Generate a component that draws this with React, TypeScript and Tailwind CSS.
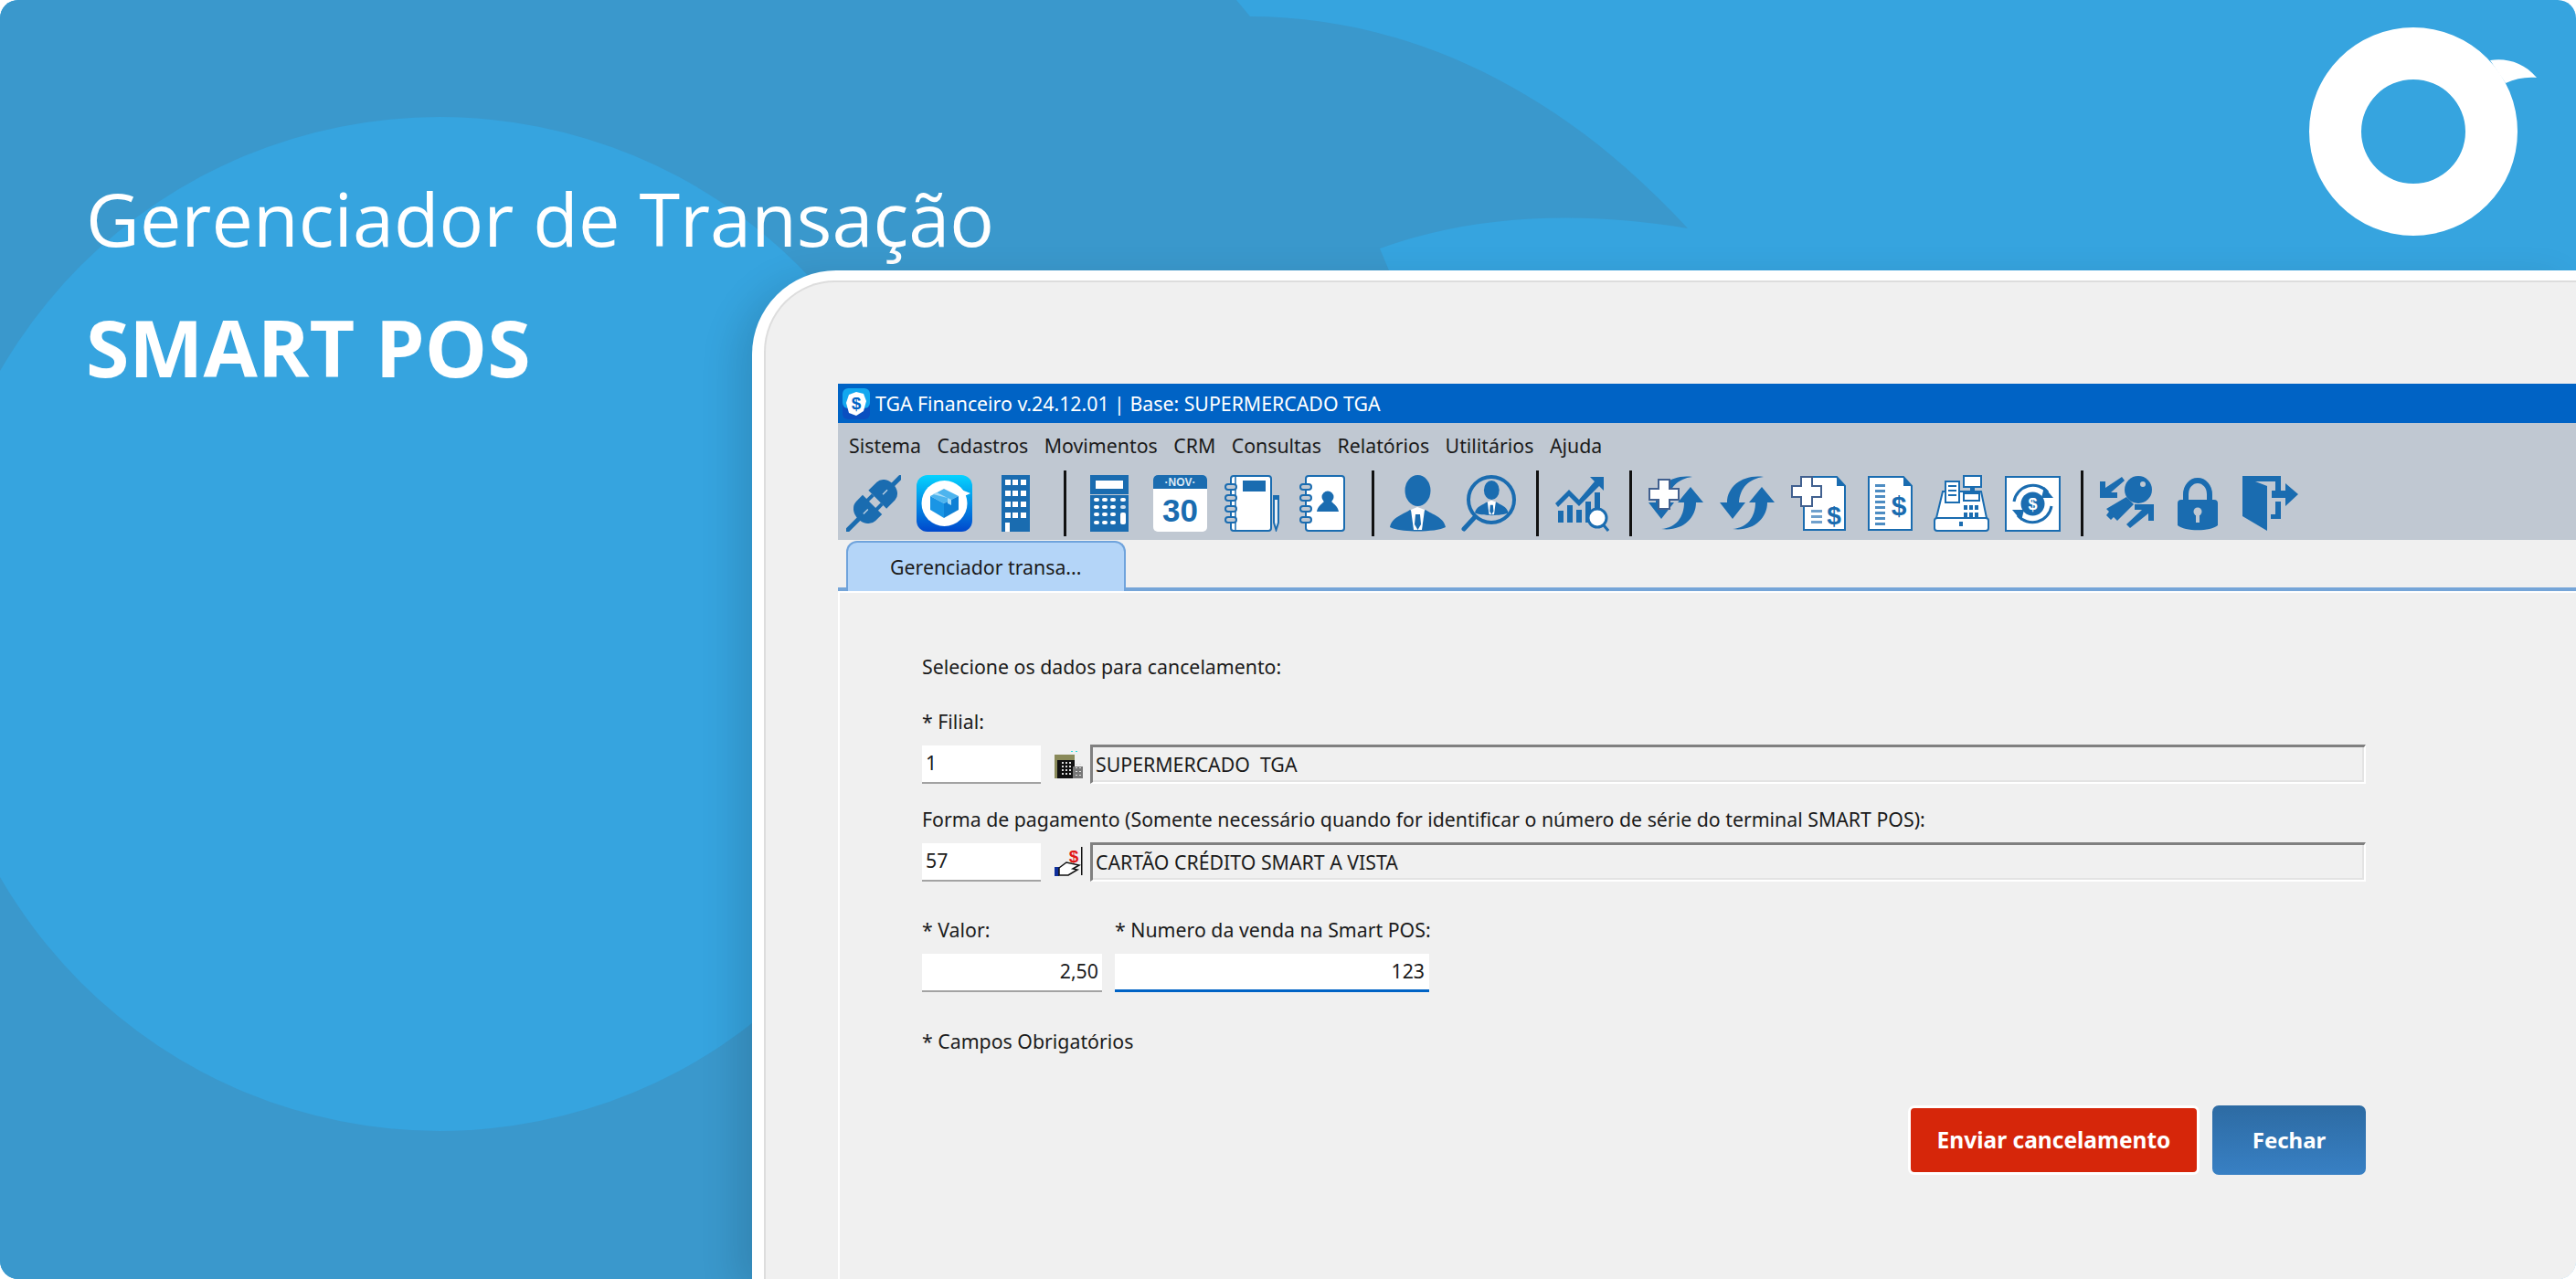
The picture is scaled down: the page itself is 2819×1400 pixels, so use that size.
const BLUE = "#1a6cb0";

function Background() {
  return (
    <svg className="absolute inset-0" width="2819" height="1400" viewBox="0 0 2819 1400">
      <rect width="2819" height="1400" fill="#36a4df" />
      <path
        d="M0 0H1353L1368 18C1530 18 1700 90 1847 250C1740 232 1620 232 1510 272L1530 320L900 320V1400H0Z"
        fill="#3a98cc"
      />
      <circle cx="481" cy="683" r="555" fill="#36a4df" />
    </svg>
  );
}

function Logo() {
  return (
    <svg width="250" height="228" viewBox="0 0 250 228" className="mt-[30px] mr-[42px]">
      <path
        fillRule="evenodd"
        fill="#fff"
        d="M114 0a114 114 0 1 0 0 228a114 114 0 1 0 0-228ZM114 57a57 57 0 1 1 0 114a57 57 0 1 1 0-114Z"
      />
      <path fill="#fff" d="M198 36C215 33 235 38 249 55C237 54 226 56 215 61Z" />
    </svg>
  );
}

function AppIcon() {
  return (
    <svg width="30" height="34" viewBox="0 0 30 34">
      <rect width="30" height="34" rx="6" fill="#0a4fc0" />
      <rect width="30" height="22" rx="6" fill="#12a8ef" />
      <path d="M15 4L23 6L26 14L23 25L15 30L7 27L4 16L7 7Z" fill="#fff" />
      <text x="15" y="23" textAnchor="middle" fontSize="19" fontWeight="700" fill="#0063c5" fontFamily="Liberation Sans">$</text>
    </svg>
  );
}

function PlugIcon() {
  return (
    <svg width="60" height="62" viewBox="0 0 60 62" className="shrink-0">
      <g transform="rotate(45 30 31)" fill={BLUE}>
        <rect x="28" y="-12" width="5" height="18" rx="2" />
        <path d="M16 25V12a14 11 0 0 1 28 0V25Z" />
        <rect x="21" y="25" width="4" height="9" />
        <rect x="35" y="25" width="4" height="9" />
        <path d="M15 33H45V43a15 12 0 0 1-30 0Z" />
        <rect x="28" y="50" width="5" height="24" rx="2" />
        <rect x="29.500" y="10" width="1.500" height="7" fill="#b9cfe2" />
        <rect x="29.500" y="40" width="1.500" height="7" fill="#b9cfe2" />
      </g>
    </svg>
  );
}

function BoxIcon() {
  return (
    <svg width="61" height="62" viewBox="0 0 61 62" className="ml-[17px] shrink-0">
      <defs>
        <linearGradient id="boxBg" x1="0" y1="0" x2="0" y2="1">
          <stop offset="0" stopColor="#05d3ff" />
          <stop offset="1" stopColor="#0047cc" />
        </linearGradient>
      </defs>
      <rect width="61" height="62" rx="12" fill="url(#boxBg)" />
      <circle cx="30.500" cy="31" r="25" fill="#fff" />
      <path d="M44 14L59 20L48 25Z" fill="#fff" />
      <path d="M15 23L30 15L46 23L30 31Z" fill="#4db4ee" />
      <path d="M15 23L30 31V47L15 38Z" fill="#1a95e5" />
      <path d="M46 23L30 31V47L46 38Z" fill="#0f80d5" />
      <path d="M22 19L38 27V33L34 31V25L18 21Z" fill="#a9dcf7" />
    </svg>
  );
}

function BuildingIcon() {
  const windows = [4, 16, 28, 40];
  return (
    <svg width="31" height="62" viewBox="0 0 31 62" className="ml-[32px] shrink-0">
      <rect width="31" height="62" fill={BLUE} />
      {windows.map((y) => (
        <g key={y} fill="#fff">
          <rect x="4" y={y + 1} width="6" height="6" />
          <rect x="12" y={y + 1} width="6" height="6" />
          <rect x="21" y={y + 1} width="6" height="6" />
        </g>
      ))}
      <rect x="4" y="52" width="5" height="10" fill="#fff" />
    </svg>
  );
}

function Separator({ className }: { className: string }) {
  return <div className={`h-[72px] w-[3px] shrink-0 bg-[#111] ${className}`} />;
}

function CalcIcon() {
  const rows = [25, 33, 41, 50];
  return (
    <svg width="42" height="62" viewBox="0 0 42 62" className="ml-[26px] shrink-0">
      <rect width="42" height="62" fill={BLUE} />
      <rect x="6" y="6" width="30" height="9" fill="#fff" />
      <rect x="0" y="21" width="42" height="1" fill="#c0c8d2" />
      {rows.map((y) => (
        <g key={y} fill="#fff">
          <rect x="4" y={y} width="6" height="4" rx="2" />
          <rect x="13" y={y} width="6" height="4" rx="2" />
          <rect x="22" y={y} width="6" height="4" rx="2" />
        </g>
      ))}
      <rect x="33" y="25" width="6" height="4" rx="2" fill="#fff" />
      <rect x="33" y="33" width="6" height="4" rx="2" fill="#cfe0ef" />
      <rect x="33" y="41" width="6" height="13" rx="2" fill="#fff" />
    </svg>
  );
}

function CalendarIcon() {
  return (
    <svg width="59" height="62" viewBox="0 0 59 62" className="ml-[27px] shrink-0">
      <rect width="59" height="62" rx="5" fill="#fff" />
      <path d="M0 15V5a5 5 0 0 1 5-5H54a5 5 0 0 1 5 5V15Z" fill={BLUE} />
      <text x="29.5" y="12" textAnchor="middle" fontSize="12" fontWeight="700" fill="#dce9f5" fontFamily="Liberation Sans">·NOV·</text>
      <text x="29.5" y="51" textAnchor="middle" fontSize="35" fontWeight="700" fill={BLUE} fontFamily="Liberation Sans">30</text>
    </svg>
  );
}

function Rings({ x = 0 }: { x?: number }) {
  return (
    <g fill="#c0c8d2" stroke={BLUE} strokeWidth="2">
      {[13, 25, 37, 49].map((y) => (
        <rect key={y} x={x + 1} y={y - 3} width="12" height="6" rx="3" />
      ))}
    </g>
  );
}

function NotebookIcon() {
  return (
    <svg width="60" height="62" viewBox="0 0 60 62" className="ml-[19px] shrink-0">
      <rect x="7" y="1" width="44" height="60" rx="3" fill="#fff" stroke={BLUE} strokeWidth="2" />
      <line x1="12" y1="1" x2="12" y2="61" stroke={BLUE} strokeWidth="1.5" />
      <rect x="20" y="6" width="25" height="12" fill={BLUE} />
      <Rings />
      <path d="M54 23H59V52L56.500 60L54 52Z" fill="#e8eef5" stroke={BLUE} strokeWidth="2" />
      <rect x="53" y="22" width="7" height="5" fill={BLUE} />
    </svg>
  );
}

function ContactIcon() {
  return (
    <svg width="50" height="62" viewBox="0 0 50 62" className="ml-[22px] shrink-0">
      <rect x="7" y="1" width="42" height="60" rx="3" fill="#fff" stroke={BLUE} strokeWidth="2" />
      <Rings />
      <circle cx="31" cy="24" r="6.5" fill={BLUE} />
      <path d="M19 40C20 34 24 32 27 29H35C38 32 42 34 43 40Z" fill={BLUE} />
    </svg>
  );
}

function PersonShape() {
  return (
    <g>
      <ellipse cx="30.5" cy="17" rx="14" ry="17" fill={BLUE} />
      <path d="M0 57C2 46 15 43 22 38L30 44L39 38C46 43 59 46 61 57C50 63 11 63 0 57Z" fill={BLUE} />
      <path d="M23 38L30 35L38 38L35 60H26Z" fill="#fff" />
      <path d="M28 43H33L34 54L30.500 60L27 54Z" fill={BLUE} />
    </g>
  );
}

function PersonIcon() {
  return (
    <svg width="61" height="62" viewBox="0 0 61 62" className="ml-[17px] shrink-0">
      <PersonShape />
    </svg>
  );
}

function SearchPersonIcon() {
  return (
    <svg width="60" height="62" viewBox="0 0 60 62" className="ml-[17px] shrink-0">
      <circle cx="33" cy="27" r="25" fill="none" stroke={BLUE} strokeWidth="4" />
      <line x1="15" y1="46" x2="3" y2="59" stroke={BLUE} strokeWidth="5" strokeLinecap="round" />
      <g transform="translate(15 6) scale(0.6 0.62)">
        <PersonShape />
      </g>
    </svg>
  );
}

function ChartIcon() {
  return (
    <svg width="59" height="62" viewBox="0 0 59 62" className="ml-[18px] shrink-0">
      <g fill={BLUE}>
        <rect x="3" y="39" width="6" height="13" />
        <rect x="13" y="33" width="6" height="19" />
        <rect x="23" y="38" width="6" height="14" />
        <rect x="33" y="29" width="6" height="23" />
        <rect x="43" y="19" width="6" height="18" />
        <path d="M38 2H53V17L48 12L26 34L15 23L3 35L0 31L15 16L26 27L43 7Z" />
      </g>
      <circle cx="46" cy="47" r="10" fill="#fff" stroke={BLUE} strokeWidth="3" />
      <line x1="53" y1="55" x2="58" y2="61" stroke={BLUE} strokeWidth="3" />
    </svg>
  );
}

function Arrows() {
  return (
    <g fill={BLUE}>
      <path d="M48 2C32 4 22 14 21 30L28 30L14 48L0 30L8 30C8 12 26 -1 48 2Z" />
      <path d="M14 59C30 58 39 46 39 30L32 30L46 13L60 30L52 30C52 48 36 62 14 59Z" />
    </g>
  );
}

function PlusShape({ x, y }: { x: number; y: number }) {
  return (
    <path
      transform={`translate(${x} ${y})`}
      d="M11 1H23V11H33V23H23V33H11V23H1V11H11Z"
      fill="#fff"
      stroke="#41608f"
      strokeWidth="2"
    />
  );
}

function PlusRefreshIcon() {
  return (
    <svg width="60" height="62" viewBox="0 0 60 62" className="ml-[18px] shrink-0">
      <Arrows />
      <PlusShape x={0} y={4} />
    </svg>
  );
}

function RefreshIcon() {
  return (
    <svg width="60" height="62" viewBox="0 0 60 62" className="ml-[18px] shrink-0">
      <Arrows />
    </svg>
  );
}

function DocPlusIcon() {
  return (
    <svg width="60" height="62" viewBox="0 0 60 62" className="ml-[18px] shrink-0">
      <path d="M14 2H50L59 12V60H14Z" fill="#fff" stroke={BLUE} strokeWidth="2" />
      <path d="M50 2L59 12H50Z" fill={BLUE} />
      <g fill="#6fa0cc">
        <rect x="22" y="38" width="12" height="3" />
        <rect x="22" y="44" width="12" height="3" />
        <rect x="22" y="50" width="12" height="3" />
      </g>
      <text x="47" y="54" textAnchor="middle" fontSize="28" fontWeight="700" fill={BLUE} fontFamily="Liberation Sans">$</text>
      <PlusShape x={0} y={1} />
    </svg>
  );
}

function DocIcon() {
  return (
    <svg width="49" height="62" viewBox="0 0 49 62" className="ml-[24px] shrink-0">
      <path d="M1 2H39L48 12V60H1Z" fill="#fff" stroke={BLUE} strokeWidth="2" />
      <path d="M39 2L48 12H39Z" fill={BLUE} />
      <g fill="#4d8cc2">
        {[10, 16, 22, 28, 34, 40, 46, 52].map((y) => (
          <rect key={y} x="8" y={y} width="11" height="3" />
        ))}
      </g>
      <text x="34" y="44" textAnchor="middle" fontSize="30" fontWeight="700" fill={BLUE} fontFamily="Liberation Sans">$</text>
    </svg>
  );
}

function RegisterIcon() {
  return (
    <svg width="61" height="62" viewBox="0 0 61 62" className="ml-[23px] shrink-0">
      <rect x="33" y="1" width="19" height="12" fill="#fff" stroke={BLUE} strokeWidth="2" />
      <rect x="40" y="13" width="5" height="5" fill={BLUE} />
      <path d="M10 18H52L58 47H3Z" fill="#fff" stroke={BLUE} strokeWidth="2" />
      <rect x="13" y="7" width="15" height="23" fill="#fff" stroke={BLUE} strokeWidth="2" />
      <g fill={BLUE}>
        <rect x="16" y="11" width="9" height="2" />
        <rect x="16" y="16" width="9" height="2" />
        <rect x="16" y="21" width="9" height="2" />
      </g>
      <rect x="33" y="20" width="17" height="8" fill="#fff" stroke={BLUE} strokeWidth="2" />
      <g fill={BLUE}>
        {[33, 41].map((y) => (
          <g key={y}>
            <rect x="33" y={y} width="4" height="5" />
            <rect x="39" y={y} width="4" height="5" />
            <rect x="45" y={y} width="4" height="5" />
          </g>
        ))}
      </g>
      <rect x="1" y="47" width="59" height="14" rx="3" fill="#fff" stroke={BLUE} strokeWidth="2" />
      <rect x="28" y="51" width="4" height="5" fill={BLUE} />
    </svg>
  );
}

function ExchangeIcon() {
  return (
    <svg width="61" height="61" viewBox="0 0 61 61" className="ml-[17px] shrink-0">
      <rect x="1" y="1" width="59" height="59" fill="#fff" stroke={BLUE} strokeWidth="2" />
      <path d="M10 28A21 21 0 0 1 47 18" fill="none" stroke={BLUE} strokeWidth="3" />
      <path d="M43 12L53 24L40 24Z" fill={BLUE} />
      <path d="M51 33A21 21 0 0 1 14 43" fill="none" stroke={BLUE} strokeWidth="3" />
      <path d="M18 49L8 37L21 37Z" fill={BLUE} />
      <circle cx="30.500" cy="30.500" r="13" fill={BLUE} />
      <text x="30.500" y="37" textAnchor="middle" fontSize="18" fontWeight="700" fill="#fff" fontFamily="Liberation Sans">$</text>
    </svg>
  );
}

function KeysIcon() {
  return (
    <svg width="59" height="62" viewBox="0 0 59 62" className="ml-[18px] shrink-0">
      <g fill={BLUE}>
        <circle cx="42" cy="16" r="15" />
        <path d="M29 24L37 32L19 50L15 46L12 49L7 44L10 40L7 37Z" />
        <path d="M24 1L27 5L12 18L19 18V24H0V6H6V13Z" transform="translate(0 1)" />
        <path d="M33 58L29 54L46 38L38 38V32H59V50H53V42Z" />
      </g>
      <circle cx="47" cy="10" r="3" fill="#c0c8d2" />
    </svg>
  );
}

function LockIcon() {
  return (
    <svg width="44" height="60" viewBox="0 0 44 60" className="ml-[26px] shrink-0">
      <path d="M9 28V20a13 15 0 0 1 26 0V28" fill="none" stroke={BLUE} strokeWidth="6" />
      <path d="M0 30a4 4 0 0 1 4-4H40a4 4 0 0 1 4 4V54C36 61 8 61 0 54Z" fill={BLUE} />
      <circle cx="22" cy="39" r="4.500" fill="#c0c8d2" />
      <rect x="20" y="40" width="4" height="11" fill="#c0c8d2" />
    </svg>
  );
}

function DoorIcon() {
  return (
    <svg width="61" height="60" viewBox="0 0 61 60" className="ml-[27px] shrink-0">
      <g fill={BLUE}>
        <path d="M0 0H42V17H36V6H14L27 11V60L0 44Z" />
        <path d="M31 42H36V28H42V47H31Z" />
        <path d="M32 16H47V8L61 20L47 33V24H32Z" />
      </g>
    </svg>
  );
}

function SmallBuildings() {
  return (
    <svg width="31" height="31" viewBox="0 0 31 31" className="ml-[15px] shrink-0">
      <rect x="0" y="5" width="22" height="26" fill="#8a8a5a" />
      <rect x="3" y="11" width="19" height="20" fill="#111" />
      <rect x="20" y="18" width="11" height="13" fill="#777" />
      <g fill="#ddd">
        {[13, 17, 21, 25].map((y) => (
          <g key={y}>
            <rect x="8" y={y} width="2" height="2" />
            <rect x="12" y={y} width="2" height="2" />
            <rect x="16" y={y} width="2" height="2" />
            <rect x="23" y={y + 2} width="2" height="1" />
            <rect x="27" y={y + 2} width="2" height="1" />
          </g>
        ))}
      </g>
      <rect x="18" y="1" width="2" height="1" fill="#22dddd" />
      <rect x="23" y="1" width="2" height="1" fill="#22dddd" />
    </svg>
  );
}

function HandIcon() {
  return (
    <svg width="31" height="33" viewBox="0 0 31 33" className="ml-[15px] shrink-0">
      <rect x="29" y="0" width="1.500" height="31" fill="#111" />
      <text x="21" y="17" textAnchor="middle" fontSize="19" fontWeight="700" fill="#e11818" fontFamily="Liberation Sans">$</text>
      <rect x="0" y="22" width="5" height="10" fill="#0f2f9c" />
      <path d="M5 23L13 17L27 20L20 24L25 25L15 31H5Z" fill="#fff" stroke="#111" strokeWidth="1.500" />
    </svg>
  );
}

function Input({ value, className }: { value: string; className: string }) {
  return <div className={`h-[42px] border-b-2 border-[#a3a3a3] bg-white leading-[38px] ${className}`}>{value}</div>;
}

function ReadOnly({ value }: { value: string }) {
  return (
    <div className="h-[43px] flex-1 border-t-[3px] border-l-[3px] border-r-2 border-b-2 border-t-[#808080] border-l-[#808080] border-r-white border-b-white pl-[3px] leading-[38px] whitespace-pre shadow-[inset_-2px_-2px_0_#e3e3e3]">
      {value}
    </div>
  );
}

export default function App() {
  const menus = ["Sistema", "Cadastros", "Movimentos", "CRM", "Consultas", "Relatórios", "Utilitários", "Ajuda"];

  return (
    <div className="h-[1400px] w-[2819px] overflow-hidden bg-white font-['Noto_Sans',sans-serif]">
      <div className="relative h-full w-full overflow-hidden rounded-[20px]">
        <Background />
        <div className="relative flex h-full flex-col">
          <header className="flex h-[296px] shrink-0 items-start justify-between">
            <h1 className="mt-[195px] pl-[94px] font-['Open_Sans',sans-serif] text-[81px] leading-[88px] font-normal whitespace-nowrap text-white">
              Gerenciador de Transação
            </h1>
            <Logo />
          </header>

          <div className="flex min-h-0 flex-1">
            <div className="w-[823px] shrink-0 pl-[94px]">
              <h2 className="mt-[40px] font-['Open_Sans',sans-serif] text-[86px] leading-[88px] font-bold text-white">
                SMART POS
              </h2>
            </div>

            <div className="min-w-0 flex-1 rounded-tl-[92px] bg-white pt-[11px] pl-[13px] shadow-[-18px_10px_40px_rgba(0,0,0,0.12)]">
              <div className="h-full rounded-tl-[78px] border-t-2 border-l-2 border-[#dddddd] bg-[#f0f0f0] pt-[111px] pl-[79px]">
                <div className="flex h-full flex-col text-[21.3px] text-[#1b1b1b]">
                  <div className="flex h-[43px] shrink-0 items-center gap-[6px] bg-[#0063c5] pl-[5px] text-white">
                    <AppIcon />
                    <span>TGA Financeiro v.24.12.01 | Base: SUPERMERCADO TGA</span>
                  </div>

                  <div className="shrink-0 bg-[#c0c8d2]">
                    <nav className="flex h-[50px] items-center gap-[17.5px] pl-[12px]">
                      {menus.map((item) => (
                        <span key={item}>{item}</span>
                      ))}
                    </nav>
                    <div className="flex h-[78px] items-center pb-[2px] pl-[9px]">
                      <PlugIcon />
                      <BoxIcon />
                      <BuildingIcon />
                      <Separator className="ml-[37px]" />
                      <CalcIcon />
                      <CalendarIcon />
                      <NotebookIcon />
                      <ContactIcon />
                      <Separator className="ml-[29px]" />
                      <PersonIcon />
                      <SearchPersonIcon />
                      <Separator className="ml-[22px]" />
                      <ChartIcon />
                      <Separator className="ml-[22px]" />
                      <PlusRefreshIcon />
                      <RefreshIcon />
                      <DocPlusIcon />
                      <DocIcon />
                      <RegisterIcon />
                      <ExchangeIcon />
                      <Separator className="ml-[22px]" />
                      <KeysIcon />
                      <LockIcon />
                      <DoorIcon />
                    </div>
                  </div>

                  <div className="flex h-[56px] shrink-0 items-end border-b-4 border-[#75a5d8] pl-[9px]">
                    <div className="-mb-[4px] h-[55px] w-[306px] rounded-t-[12px] border-2 border-b-0 border-[#6fa3dc] bg-[#b4d5f8] pl-[46px] leading-[54px]">
                      Gerenciador transa...
                    </div>
                  </div>

                  <main className="min-h-0 flex-1 border-t-2 border-l-2 border-white pt-[68px] pl-[90px]">
                    <div className="w-[1580px]">
                      <p className="h-[26px] leading-[26px]">Selecione os dados para cancelamento:</p>
                      <p className="mt-[34px] h-[26px] leading-[26px]">* Filial:</p>
                      <div className="mt-[12px] flex items-center">
                        <Input value="1" className="w-[130px] pl-[4px]" />
                        <SmallBuildings />
                        <div className="ml-[8px] flex flex-1">
                          <ReadOnly value="SUPERMERCADO  TGA" />
                        </div>
                      </div>
                      <p className="mt-[26px] h-[26px] leading-[26px]">
                        Forma de pagamento (Somente necessário quando for identificar o número de série do terminal SMART POS):
                      </p>
                      <div className="mt-[12px] flex items-center">
                        <Input value="57" className="w-[130px] pl-[4px]" />
                        <HandIcon />
                        <div className="ml-[8px] flex flex-1">
                          <ReadOnly value="CARTÃO CRÉDITO SMART A VISTA" />
                        </div>
                      </div>
                      <div className="mt-[40px] flex gap-[14px]">
                        <div className="w-[197px]">
                          <p className="h-[26px] leading-[26px]">* Valor:</p>
                          <Input value="2,50" className="mt-[13px] pr-[4px] text-right" />
                        </div>
                        <div className="w-[344px]">
                          <p className="h-[26px] leading-[26px] whitespace-nowrap">* Numero da venda na Smart POS:</p>
                          <div className="mt-[13px] h-[42px] border-b-[3px] border-[#0063c5] bg-white pr-[5px] text-right leading-[38px]">
                            123
                          </div>
                        </div>
                      </div>
                      <p className="mt-[41px] h-[26px] leading-[26px]">* Campos Obrigatórios</p>
                      <div className="mt-[57px] flex justify-end gap-[14px]">
                        <button className="h-[76px] w-[319px] rounded-[7px] border-[3px] border-white bg-[#d6260a] text-[24.5px] font-bold text-white">
                          Enviar cancelamento
                        </button>
                        <button className="h-[76px] w-[168px] rounded-[7px] bg-gradient-to-b from-[#2d6ba3] to-[#3880c4] text-[24px] font-bold text-white">
                          Fechar
                        </button>
                      </div>
                    </div>
                  </main>
                </div>
              </div>
            </div>
          </div>
        </div>
      </div>
    </div>
  );
}
